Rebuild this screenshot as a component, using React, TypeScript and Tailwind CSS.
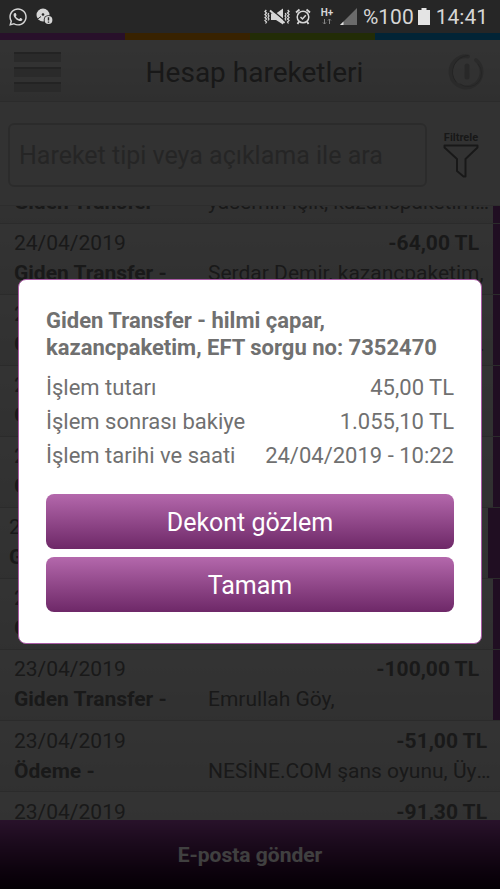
import React from 'react';
import { FaWhatsapp } from 'react-icons/fa';

interface Transaction {
  date: string;
  type: string;
  description: string;
  amount: string;
  marked?: boolean;
  selected?: boolean;
}

const transactions: Transaction[] = [
  { date: '24/04/2019', type: 'Giden Transfer -', description: 'yasemin Işık, kazancpaketim, EFT', amount: '-45,00 TL', marked: true },
  { date: '24/04/2019', type: 'Giden Transfer -', description: 'Serdar Demir, kazancpaketim,', amount: '-64,00 TL', marked: true },
  { date: '24/04/2019', type: 'Giden Transfer -', description: 'hilmi çapar, kazancpaketim, EFT', amount: '-45,00 TL', marked: true },
  { date: '24/04/2019', type: 'Giden Transfer -', description: 'hilmi çapar,', amount: '-45,00 TL', marked: true },
  { date: '24/04/2019', type: 'Giden Transfer -', description: 'hilmi çapar,', amount: '-45,00 TL', marked: true },
  { date: '24/04/2019', type: 'Giden Transfer -', description: 'hilmi çapar,', amount: '-45,00 TL', marked: true, selected: true },
  { date: '23/04/2019', type: 'Giden Transfer -', description: 'hilmi çapar,', amount: '-45,00 TL', marked: true },
  { date: '23/04/2019', type: 'Giden Transfer -', description: 'Emrullah Göy,', amount: '-100,00 TL', marked: true },
  { date: '23/04/2019', type: 'Ödeme -', description: 'NESİNE.COM şans oyunu, Üyelik', amount: '-51,00 TL' },
  { date: '23/04/2019', type: 'Ödeme -', description: 'NESİNE.COM şans oyunu, Üyelik', amount: '-91,30 TL' },
];

const details = [
  { label: 'İşlem tutarı', value: '45,00 TL' },
  { label: 'İşlem sonrası bakiye', value: '1.055,10 TL' },
  { label: 'İşlem tarihi ve saati', value: '24/04/2019 - 10:22' },
];

const StatusBar: React.FC = () => (
  <div className="h-[33px] shrink-0 flex items-center justify-between pl-2 pr-3 bg-[#262626] text-[#d6d6d6]">
    <div className="flex items-center gap-2">
      <FaWhatsapp size={20} />
      <svg width="18" height="18" viewBox="0 0 18 18">
        <circle cx="7" cy="7" r="6.500" fill="currentColor" />
        <circle cx="7" cy="6.500" r="1.300" fill="#262626" />
        <path d="M1 11.500l4-3" stroke="#262626" strokeWidth="1" />
        <circle cx="12.500" cy="12" r="4.800" fill="#262626" />
        <circle cx="12.500" cy="12" r="3.900" fill="currentColor" />
        <path d="M12.500 9.300v3.200M12.500 13.500v1.300" stroke="#262626" strokeWidth="1.400" />
      </svg>
    </div>

    <div className="flex items-center">
      {/* vibrate, sound off */}
      <svg width="26" height="18" viewBox="0 0 26 18" fill="none" stroke="currentColor">
        <path d="M2.300 2L1 3.500 2.500 5 1 6.500 2.500 8 1 9.500 2.500 11 1 12.500 2.500 14 1.500 15.500" strokeWidth="1.300" />
        <path d="M4.800 5L4 6.500 5 8 4 9.500 5 11 4 12.500" strokeWidth="1.200" />
        <path d="M23.700 2L25 3.500 23.500 5 25 6.500 23.500 8 25 9.500 23.500 11 25 12.500 23.500 14 24.500 15.500" strokeWidth="1.300" />
        <path d="M21.200 5l.8 1.500L21 8l1 1.500-1 1.500 1 1.500" strokeWidth="1.200" />
        <path d="M7 5.500h5l7-5v16l-7-4.500H7z" fill="currentColor" stroke="none" />
        <path d="M7.500 1.500l13 11" stroke="#262626" strokeWidth="1.500" />
        <path d="M6 2.500l14.500 12.500" strokeWidth="2" />
      </svg>
      <svg className="ml-[5px]" width="16" height="18" viewBox="0 0 16 18" fill="none" stroke="currentColor" strokeWidth="1.500">
        <circle cx="8" cy="9" r="5.800" />
        <path d="M5.500 9l2 2 3.300-3.700" />
        <path d="M1 4.500L4.500 1.500M15 4.500l-3.500-3M4 13.500L2.500 16M12 13.500l1.500 2.500" strokeWidth="1.800" />
      </svg>
      <div className="ml-[10px] w-3 flex flex-col items-center">
        <span className="text-[10px] leading-[10px] font-bold">H+</span>
        <svg width="10" height="7" viewBox="0 0 10 7" fill="none" stroke="#858585">
          <path d="M2.500 1v5M1 4.500L2.500 6 4 4.500M7.500 6V1M6 2.500L7.500 1 9 2.500" />
        </svg>
      </div>
      <svg className="ml-[7px]" width="17" height="17" viewBox="0 0 17 17">
        <path d="M17 0v17H0z" fill="#6b6b6b" />
        <path d="M3.500 13.500V17H0z" fill="#e0e0e0" />
      </svg>
      <span className="ml-[6px] text-[21px] leading-6">%100</span>
      <svg className="ml-1" width="12" height="17" viewBox="0 0 12 17" fill="#e4e4e4">
        <path d="M3.500 0h5v2H12v15H0V2h3.500z" />
      </svg>
      <span className="ml-[6px] text-[21px] leading-6">14:41</span>
    </div>
  </div>
);

const Header: React.FC = () => (
  <header>
    <div className="h-[7px] grid grid-cols-4">
      <span className="bg-[#a040a8]" />
      <span className="bg-[#e08800]" />
      <span className="bg-[#88b018]" />
      <span className="bg-[#0890d8]" />
    </div>
    <div className="h-[62px] flex items-center justify-between pt-[2px] px-[14px] bg-linear-to-b from-[#cccccc] to-[#bcbcbc] border-b border-[#acacac]">
      <button type="button" aria-label="Menü" className="flex flex-col gap-[5px]">
        <span className="w-[47px] h-[10px] bg-[#a8a8a8] border-t-2 border-[#8c8c8c]" />
        <span className="w-[47px] h-[10px] bg-[#a8a8a8] border-t-2 border-[#8c8c8c]" />
        <span className="w-[47px] h-[10px] bg-[#a8a8a8] border-t-2 border-[#8c8c8c]" />
      </button>
      <h1 className="pt-[3px] text-[28px] leading-8 text-[#606060]">Hesap hareketleri</h1>
      <button type="button" aria-label="Çıkış">
        <svg width="38" height="38" viewBox="0 0 38 38" fill="none" strokeLinecap="round">
          <path d="M28 7A15.500 15.500 0 1 1 20 3.500" stroke="#a8a8a8" strokeWidth="4" />
          <path d="M19 13v11" stroke="#a0a0a0" strokeWidth="5" />
          <path d="M8 29A16.500 16.500 0 0 1 20 2.500" stroke="#8c8c8c" strokeWidth="1" />
          <path d="M30 11A13.500 13.500 0 0 1 12 31" stroke="#949494" strokeWidth="1" />
        </svg>
      </button>
    </div>
  </header>
);

const SearchBar: React.FC = () => (
  <div className="h-[104px] flex items-center px-2 pt-[2px] bg-[#c8c8c8] border-b border-[#b4b4b4]">
    <input
      type="text"
      aria-label="Hareket ara"
      placeholder="Hareket tipi veya açıklama ile ara"
      className="min-w-0 flex-1 h-[64px] px-[9px] pt-[2px] rounded-md border-2 border-[#acacac] bg-[#c6c6c6] text-[25px] text-[#606060] placeholder:text-[#949494] placeholder:opacity-100 outline-none"
    />
    <button type="button" className="ml-4 mr-[13px] flex flex-col items-center text-[#606060]">
      <span className="text-[11px] leading-3 font-bold">Filtrele</span>
      <svg width="36" height="34" viewBox="0 0 36 34" fill="none" stroke="currentColor" strokeWidth="2" strokeLinejoin="round">
        <path d="M1.500 1.500h33v2L22.500 15v17.500h-2L14 27V15L1.500 3.500z" />
      </svg>
    </button>
  </div>
);

const TransactionRow: React.FC<{ item: Transaction }> = ({ item }) => (
  <li className="h-[71px] shrink-0 flex bg-linear-to-b from-[#cccccc] to-[#c0c0c0] border-b border-[#aaaaaa] text-[#666666] text-[21px]">
    <div className={`min-w-0 flex-1 ${item.selected ? 'pl-[9px]' : 'pl-[14px]'} ${item.marked ? 'pt-1 pr-[3px]' : 'pt-[5px] pr-[5px]'}`}>
      <div className={`flex justify-between leading-[30px] ${item.marked ? 'pr-[11px]' : 'pr-2'}`}>
        <span>{item.date}</span>
        <span className="font-bold">{item.amount}</span>
      </div>
      <div className="flex leading-[30px]">
        <span className="w-[194px] shrink-0 font-bold">{item.type}</span>
        <span className="min-w-0 flex-1 truncate">{item.description}</span>
      </div>
    </div>
    {item.marked && <span className={`bg-[#803888] ${item.selected ? 'w-3' : 'w-[7px]'}`} />}
  </li>
);

const TransactionDialog: React.FC = () => (
  <div className="absolute inset-0 flex items-center px-[18px] bg-black/75">
    <section
      role="dialog"
      aria-labelledby="dialog-title"
      className="w-full px-[27px] pt-[27px] pb-[31px] rounded-lg border border-[#a85aa4] bg-white text-[#707070]"
    >
      <h2 id="dialog-title" className="text-[22px] leading-[27px] font-bold">
        Giden Transfer - hilmi çapar, kazancpaketim, EFT sorgu no: 7352470
      </h2>
      <dl className="mt-[10px] text-[22px] leading-[34px]">
        {details.map(row => (
          <div key={row.label} className="flex justify-between">
            <dt>{row.label}</dt>
            <dd>{row.value}</dd>
          </div>
        ))}
      </dl>
      <div className="mt-[21px] flex flex-col gap-2 text-[25px] text-white">
        <button type="button" className="h-[55px] pt-[3px] rounded-lg bg-linear-to-b from-[#b468ac] to-[#6e2868]">Dekont gözlem</button>
        <button type="button" className="h-[55px] pt-[3px] rounded-lg bg-linear-to-b from-[#b468ac] to-[#6e2868]">Tamam</button>
      </div>
    </section>
  </div>
);

const App: React.FC = () => {
  return (
    <div className="h-screen flex flex-col font-[Roboto,sans-serif]">
      <StatusBar />
      <main className="relative min-h-0 flex-1 flex flex-col">
        <Header />
        <SearchBar />
        {/* list is scrolled part way into the first row */}
        <div className="min-h-0 flex-1 overflow-hidden bg-[#c8c8c8]">
          <ul className="-mt-[53px] flex flex-col">
            {transactions.map((item, index) => (
              <TransactionRow key={index} item={item} />
            ))}
          </ul>
        </div>
        <button type="button" className="h-[69px] shrink-0 pt-[2px] bg-linear-to-b from-[#a048a8] to-[#140014] text-[21px] font-bold text-white">
          E-posta gönder
        </button>
        <TransactionDialog />
      </main>
    </div>
  );
};

export default App;
